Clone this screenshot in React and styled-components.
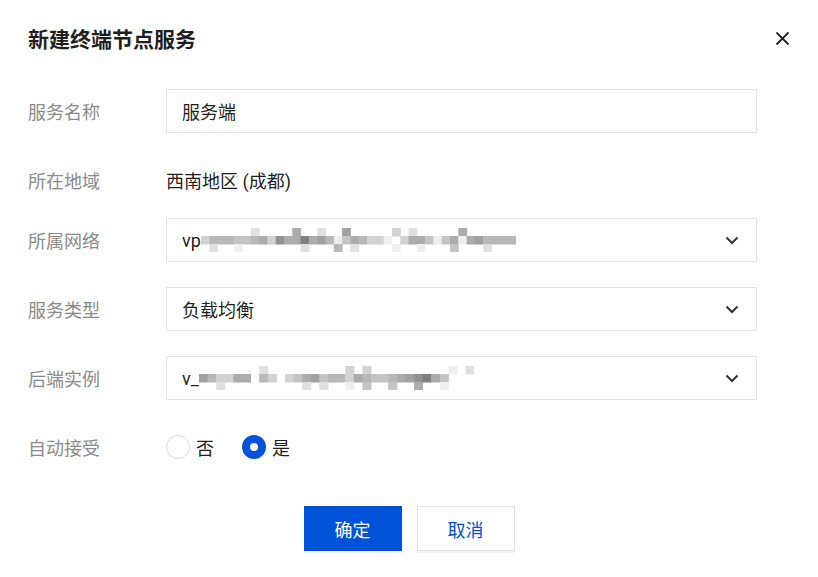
import React from 'react'
import styled, { createGlobalStyle } from 'styled-components'

const GlobalStyle = createGlobalStyle`
  html, body {
    margin: 0;
    padding: 0;
    background: #fff;
  }
  body {
    font-family: Roboto, "Noto Sans CJK SC", sans-serif;
  }
`

const Dialog = styled.div`
  width: 818px;
  height: 577px;
  box-sizing: border-box;
  padding: 0 28px;
  background: #fff;
`

const Header = styled.div`
  height: 76px;
  display: flex;
  align-items: center;
  justify-content: space-between;
`

const Title = styled.h2`
  margin: 0;
  font-size: 21px;
  font-weight: 700;
  color: rgba(0, 0, 0, 0.9);
  font-family: "Noto Sans CJK SC", sans-serif;
`

const Close = styled.button`
  width: 16px;
  height: 16px;
  padding: 0;
  border: 0;
  background: none;
  display: flex;
  align-items: center;
  justify-content: center;
  cursor: pointer;
`

const Form = styled.div`
  padding-top: 13px;
`

const Row = styled.div`
  display: grid;
  grid-template-columns: 138px 591px;
  align-items: center;
  height: 44px;
  margin-bottom: ${p => p.$gap ?? 25}px;
`

const Label = styled.div`
  font-size: 18px;
  color: #8a8a8a;
  font-family: "Noto Sans CJK SC", sans-serif;
`

const Field = styled.div`
  height: 44px;
  box-sizing: border-box;
  border: 1px solid #e2e3e8;
  display: flex;
  align-items: center;
  justify-content: space-between;
  padding: 0 17px 0 15px;
  font-size: 18px;
  color: rgba(0, 0, 0, 0.9);
`

const Value = styled.div`
  display: flex;
  align-items: center;
  font-size: 18px;
  color: rgba(0, 0, 0, 0.9);
`

const Plain = styled.div`
  font-size: 18px;
  color: rgba(0, 0, 0, 0.9);
`

const Radios = styled.div`
  display: flex;
  align-items: center;
  gap: 28px;
`

const RadioItem = styled.label`
  display: flex;
  align-items: center;
  gap: 6px;
  font-size: 18px;
  color: rgba(0, 0, 0, 0.9);
  font-family: "Noto Sans CJK SC", sans-serif;
`

const Dot = styled.span`
  width: 24px;
  height: 24px;
  box-sizing: border-box;
  border-radius: 50%;
  border: ${p => (p.$on ? '8px solid #0052d9' : '1px solid #d8dbe3')};
  background: #fff;
`

const Footer = styled.div`
  margin-top: 37px;
  display: flex;
  justify-content: center;
  gap: 15px;
`

const Button = styled.button`
  width: 98px;
  height: 45px;
  box-sizing: border-box;
  font-size: 18px;
  font-family: "Noto Sans CJK SC", sans-serif;
  border: 1px solid ${p => (p.$primary ? '#0052d9' : '#dfe1e8')};
  background: ${p => (p.$primary ? '#0052d9' : '#fff')};
  color: ${p => (p.$primary ? '#fff' : '#0052d9')};
  box-shadow: 0 2px 0 #f2f4f9;
  cursor: pointer;
`

const Chevron = () => (
  <svg width="14" height="9" viewBox="0 0 14 9">
    <path d="M1.5 1.5 L7 7 L12.5 1.5" fill="none" stroke="#333" strokeWidth="2" />
  </svg>
)

const grays = ['#6f6f6f', '#808080', '#929292', '#a0a0a0', '#acacac', '#b8b8b8', '#c4c4c4', '#d2d2d2', '#e0e0e0', '#efefef']

// blurred (pixelated) text, one string per row of cells
const Mosaic = ({ rows, cell = 10.4, h = 8 }) => {
  const w = Math.max(...rows.map(r => r.length)) * cell
  return (
    <svg width={w} height={rows.length * h} style={{ display: 'block' }}>
      {rows.map((r, y) =>
        r.split('').map((c, x) =>
          c === '.' ? null : (
            <rect key={x + '-' + y} x={x * cell} y={y * h} width={cell + 0.5} height={h + 0.5} fill={grays[+c]} />
          )
        )
      )}
    </svg>
  )
}

const vpcRows = [
  '......8....4..8..3.....7.8.....4......',
  '75556654724414359645779.74469649435555',
  '.8..9.......8...5.8....9..9...6...8...',
]

const insRows = [
  '.......8.........7.7.........9.8',
  '357744.57.7643655745665432146',
  '..8.........8.8..9.6..6..4..9',
]

export default function App() {
  return (
    <Dialog>
      <GlobalStyle />
      <Header>
        <Title>新建终端节点服务</Title>
        <Close aria-label="close">
          <svg width="15" height="15" viewBox="0 0 15 15">
            <path d="M1.5 1.5 L13.5 13.5 M13.5 1.5 L1.5 13.5" stroke="#222" strokeWidth="1.8" />
          </svg>
        </Close>
      </Header>
      <Form>
        <Row>
          <Label>服务名称</Label>
          <Field>
            <Value>服务端</Value>
          </Field>
        </Row>
        <Row $gap={16}>
          <Label>所在地域</Label>
          <Plain>西南地区 (成都)</Plain>
        </Row>
        <Row>
          <Label>所属网络</Label>
          <Field>
            <Value>
              vp
              <Mosaic rows={vpcRows} cell={8.3} />
            </Value>
            <Chevron />
          </Field>
        </Row>
        <Row>
          <Label>服务类型</Label>
          <Field>
            <Value>负载均衡</Value>
            <Chevron />
          </Field>
        </Row>
        <Row>
          <Label>后端实例</Label>
          <Field>
            <Value>
              v_
              <Mosaic rows={insRows} cell={8.6} />
            </Value>
            <Chevron />
          </Field>
        </Row>
        <Row $gap={0}>
          <Label>自动接受</Label>
          <Radios>
            <RadioItem>
              <Dot />否
            </RadioItem>
            <RadioItem>
              <Dot $on />是
            </RadioItem>
          </Radios>
        </Row>
      </Form>
      <Footer>
        <Button $primary>确定</Button>
        <Button>取消</Button>
      </Footer>
    </Dialog>
  )
}
